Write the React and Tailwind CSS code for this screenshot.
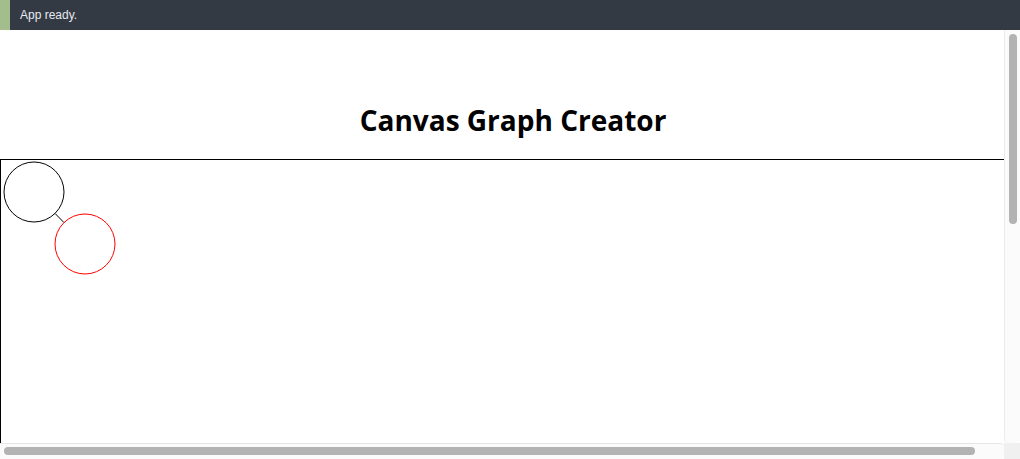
import React from "react";

const nodes = [
  { id: 1, x: 33, y: 32, r: 30, color: "#000000" },
  { id: 2, x: 84, y: 84, r: 30, color: "#ff0000" },
];

const edges = [[0, 1]];

// trim edge so it only runs between the circle rims
const edgeLine = (a, b) => {
  const dx = b.x - a.x;
  const dy = b.y - a.y;
  const d = Math.hypot(dx, dy);
  const ux = dx / d;
  const uy = dy / d;
  return {
    x1: a.x + ux * a.r,
    y1: a.y + uy * a.r,
    x2: b.x - ux * b.r,
    y2: b.y - uy * b.r,
  };
};

const GraphCanvas = () => (
  <svg width="1024" height="768" className="block border border-black bg-white">
    {edges.map(([i, j], idx) => (
      <line key={idx} {...edgeLine(nodes[i], nodes[j])} stroke="#000" strokeWidth="1" />
    ))}
    {nodes.map((n) => (
      <circle key={n.id} cx={n.x} cy={n.y} r={n.r} fill="none" stroke={n.color} strokeWidth="1" />
    ))}
  </svg>
);

const App = () => {
  return (
    <div className="h-screen flex flex-col bg-white">
      {/* status bar */}
      <div className="h-[30px] shrink-0 flex items-center bg-[#343a44]">
        <div className="w-[10px] h-full bg-[#a3be8c]" />
        <span className="ml-[10px] text-[12px] text-[#e5e9f0] font-['Liberation_Sans',Arial,sans-serif]">
          App ready.
        </span>
      </div>

      {/* viewport + scrollbars */}
      <div className="flex-1 min-h-0 grid grid-cols-[1fr_16px] grid-rows-[1fr_16px]">
        <div className="overflow-hidden min-w-0 min-h-0">
          <div className="w-[1026px]">
            <h1 className="pt-[71px] pb-[20px] text-center text-[28px] leading-[38px] font-bold text-black font-['Open_Sans',sans-serif]">
              Canvas Graph Creator
            </h1>
            <GraphCanvas />
          </div>
        </div>

        {/* vertical scrollbar */}
        <div className="bg-[#fbfbfb] border-l border-[#ececec] rounded-b-[4px] pt-[4px] pl-[4px] pr-[3px]">
          <div className="h-[190px] bg-[#b3b3b3] rounded-full" />
        </div>

        {/* horizontal scrollbar */}
        <div className="bg-[#fbfbfb] border-t border-[#e6e6e6] rounded-r-[4px] pt-[3px] pl-[4px] pr-[29px]">
          <div className="h-[8px] bg-[#b3b3b3] rounded-full" />
        </div>

        <div className="bg-[#f0f0f0]" />
      </div>
    </div>
  );
};

export default App;
